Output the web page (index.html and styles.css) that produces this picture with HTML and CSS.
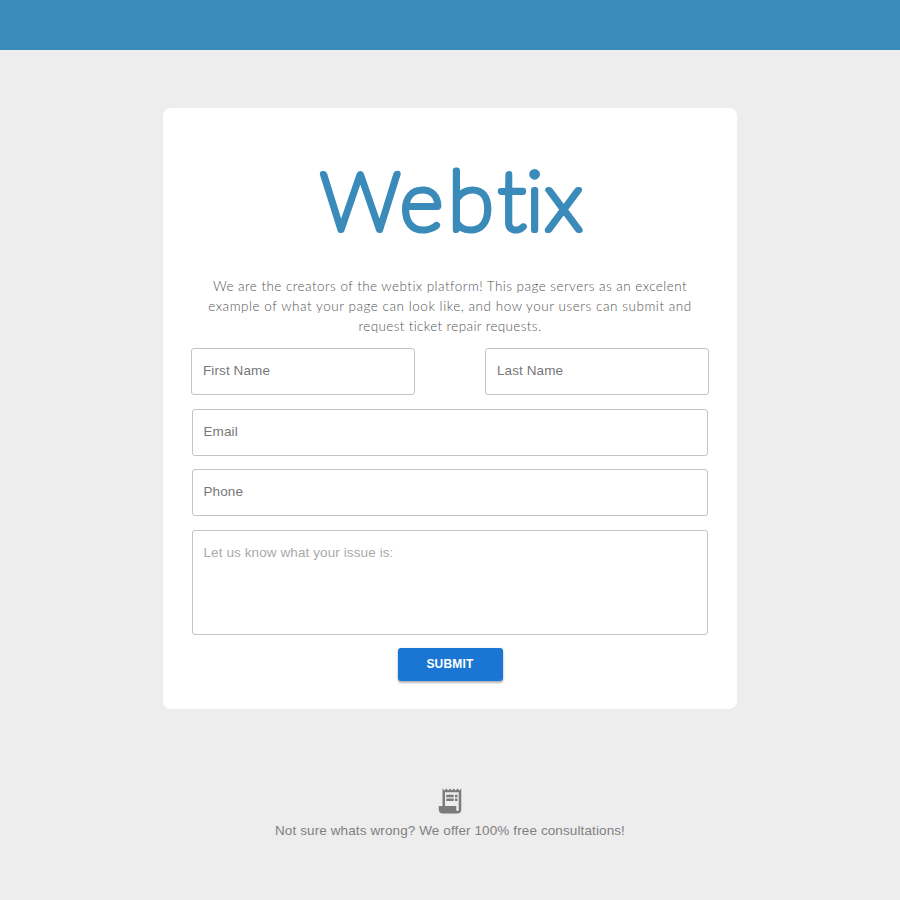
FILE: index.html
```html
<!DOCTYPE html>
<html lang="en">
<head>
<meta charset="utf-8">
<title>Webtix</title>
<link rel="stylesheet" href="styles.css">
</head>
<body>
<header class="topbar"></header>
<main class="card">
  <svg class="logo" viewBox="0 0 280 90" role="heading" aria-label="Webtix"><text class="logo-text" y="74.8"><tspan x="10.6">W</tspan><tspan class="lower" x="90 138.2 188.2 216 235.2">ebtix</tspan></text></svg>
  <p class="intro">
    <span class="line line-a">We are the creators of the webtix platform! This page servers as an excelent</span>
    <span class="line line-b">example of what your page can look like, and how your users can submit and</span>
    <span class="line line-c">request ticket repair requests.</span>
  </p>
  <form class="form">
    <div class="names">
      <input class="field" type="text" placeholder="First Name">
      <input class="field" type="text" placeholder="Last Name">
    </div>
    <input class="field wide" type="text" placeholder="Email">
    <input class="field wide" type="text" placeholder="Phone">
    <textarea class="field wide issue" placeholder="Let us know what your issue is:"></textarea>
    <button class="submit" type="button">SUBMIT</button>
  </form>
</main>
<footer class="footer">
  <svg class="receipt" viewBox="0 0 24 24"><path d="M19.5 3.5 18 2l-1.5 1.5L15 2l-1.5 1.5L12 2l-1.5 1.5L9 2 7.5 3.5 6 2v14H3v3c0 1.66 1.34 3 3 3h12c1.66 0 3-1.34 3-3V2l-1.5 1.5zM19 19c0 .55-.45 1-1 1s-1-.45-1-1v-3H8V5h11v14zM9 7h6v2H9zM16 7h2v2h-2zM9 10h6v2H9zM16 10h2v2h-2z"/></svg>
  <p class="consult">Not sure whats wrong? We offer 100% free consultations!</p>
</footer>
</body>
</html>
```
FILE: styles.css
```css
* { box-sizing: border-box; }
body {
  margin: 0;
  height: 900px;
  overflow: hidden;
  background: #ededed;
  font-family: "Liberation Sans", Arial, sans-serif;
}
.topbar { height: 50.4px; background: #3a8aba; }
.card {
  width: 574px;
  height: 601px;
  margin: 57.6px auto 0;
  padding: 47px 28px 0;
  background: #fff;
  border-radius: 8px;
}
.logo { display: block; width: 280px; height: 90px; margin: 0 auto; overflow: visible; }
.logo-text {
  font-family: Lato, sans-serif;
  font-size: 79.5px;
  font-weight: 100;
  fill: #3a8aba;
  stroke: #3a8aba;
  stroke-width: 6.2px;
  stroke-linejoin: round;
}
.lower { font-size: 83px; }
.intro {
  margin: 31px 0 0;
  font-family: Lato, sans-serif;
  font-weight: 300;
  font-size: 13.5px;
  line-height: 20.2px;
  color: #555;
  text-align: center;
}
.line { display: block; white-space: nowrap; }
.line-a { letter-spacing: 0.44px; }
.line-b { letter-spacing: 0.54px; }
.line-c { letter-spacing: 0.36px; }
.form {
  display: flex;
  flex-direction: column;
  align-items: center;
  gap: 13.6px;
  margin-top: 11.5px;
}
.names { display: flex; justify-content: space-between; width: 100%; }
.field {
  width: 224px;
  height: 47px;
  padding: 0 11px 2px;
  border: 1px solid #c4c4c4;
  border-radius: 3px;
  background: #fff;
  font: 13.5px "Liberation Sans", Arial, sans-serif;
  letter-spacing: 0.1px;
  color: #333;
  resize: none;
}
.field::placeholder { color: #777; opacity: 1; }
.wide { width: 516px; padding-left: 10.5px; }
.issue { display: block; height: 105px; padding-top: 14px; }
.issue::placeholder { color: #a9a9a9; }
.submit {
  width: 105px;
  height: 32.5px;
  padding: 0 0 1px;
  border: 0;
  border-radius: 3px;
  background: #1b76d3;
  color: #fff;
  font: bold 12px "Liberation Sans", Arial, sans-serif;
  letter-spacing: 0.2px;
  box-shadow: 0 2px 2px rgba(0,0,0,.2), 0 1px 3px rgba(0,0,0,.18);
}
.footer {
  display: flex;
  flex-direction: column;
  align-items: center;
  margin-top: 77.5px;
  color: #808080;
}
.receipt { width: 30px; height: 30px; fill: #7b7b7b; }
.consult { margin: 7px 0 0; font-size: 13.5px; line-height: 16px; letter-spacing: 0.11px; white-space: nowrap; }
```
